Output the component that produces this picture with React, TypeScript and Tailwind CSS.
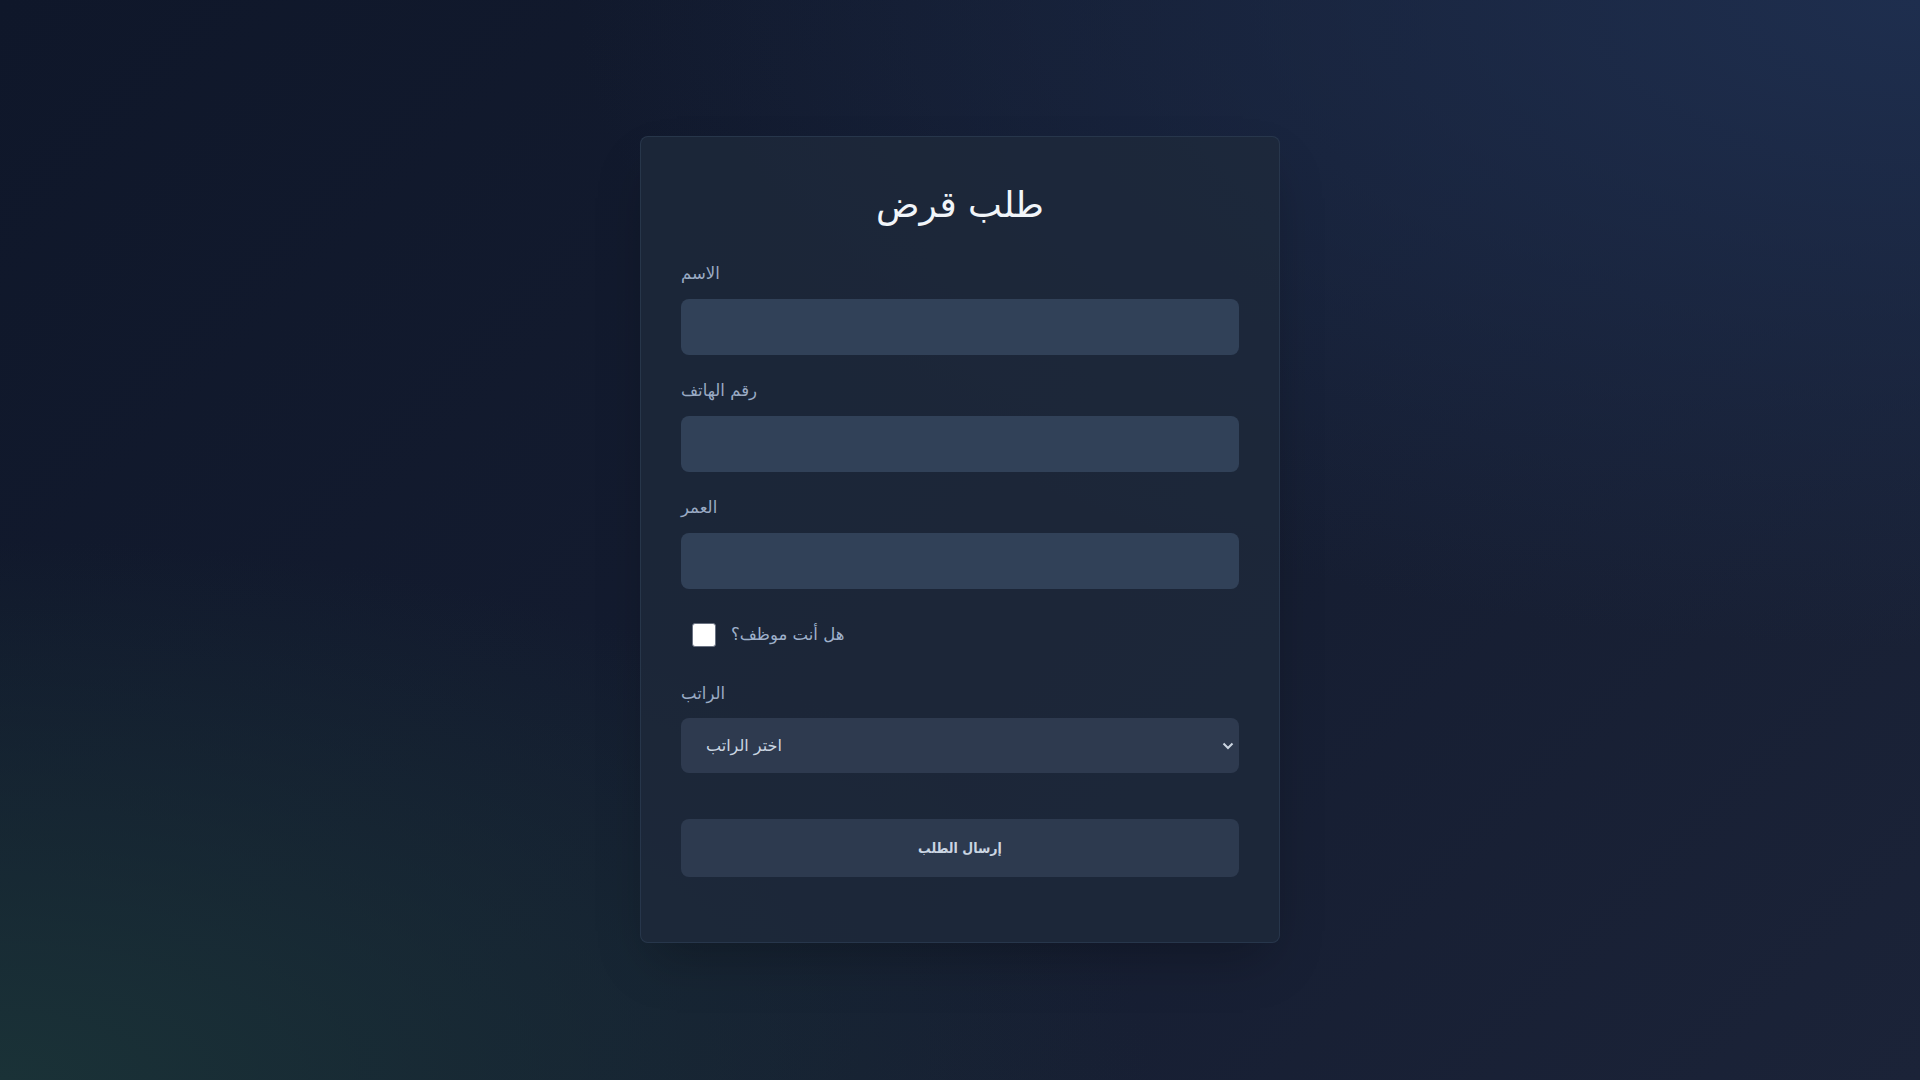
import React from "react";

function Field({ label, type = "text" }: { label: string; type?: string }) {
  return (
    <div className="mb-6">
      <label className="block mb-[13px] text-[16.5px] leading-6 text-[#9aabc4]">{label}</label>
      <input
        type={type}
        className="block w-full h-[56px] rounded-lg bg-slate-700 px-4 text-slate-100 outline-none"
      />
    </div>
  );
}

export default function App() {
  return (
    <div
      dir="ltr"
      className="min-h-screen w-full flex justify-center items-start pt-[136px] bg-[radial-gradient(ellipse_70%_60%_at_100%_0%,#1e2e4e_0%,transparent_100%),radial-gradient(ellipse_60%_50%_at_0%_100%,#1a3237_0%,transparent_100%),linear-gradient(135deg,#0f172a_0%,#141c30_50%,#1b2338_100%)]"
      style={{ fontFamily: '"DejaVu Sans", "Noto Sans", sans-serif' }}
    >
      <div className="w-[640px] rounded-lg border border-slate-700/60 bg-[#1e293b]/80 shadow-2xl px-10 pt-10 pb-[65px]">
        <h1 className="text-center text-4xl leading-10 text-slate-100 mt-2 mb-[37px]">طلب قرض</h1>
        <Field label="الاسم" />
        <Field label="رقم الهاتف" type="tel" />
        <Field label="العمر" type="number" />
        <div className="flex items-center gap-[15px] pl-[11px] pt-[10px] pb-[11px] mb-6">
          <input
            type="checkbox"
            className="appearance-none w-[24px] h-[24px] bg-white border border-gray-500 rounded-[3px] shrink-0"
          />
          <span className="text-[16.5px] leading-6 text-[#9fb1cb]">هل أنت موظف؟</span>
        </div>
        <div>
          <label className="block mb-[12px] text-[16.5px] leading-6 text-[#9aabc4]">الراتب</label>
          <div className="relative">
            <select className="block w-full h-[55px] appearance-none rounded-lg bg-[#2e3a4f] pl-[25px] pr-10 text-base text-slate-300 outline-none">
              <option>اختر الراتب</option>
            </select>
            <svg
              className="pointer-events-none absolute right-[5px] top-1/2 -translate-y-1/2"
              width="12"
              height="8"
              viewBox="0 0 12 8"
              fill="none"
            >
              <path d="M1.5 1.5 6 6l4.5-4.5" stroke="#cbd5e1" strokeWidth="2" />
            </svg>
          </div>
        </div>
        <button
          className="mt-[46px] block w-full h-[58px] rounded-lg bg-[#2d3a4f] text-[14px] font-bold text-slate-300"
          style={{ fontFamily: '"DejaVu Sans Condensed", "DejaVu Sans", sans-serif' }}
        >
          إرسال الطلب
        </button>
      </div>
    </div>
  );
}
